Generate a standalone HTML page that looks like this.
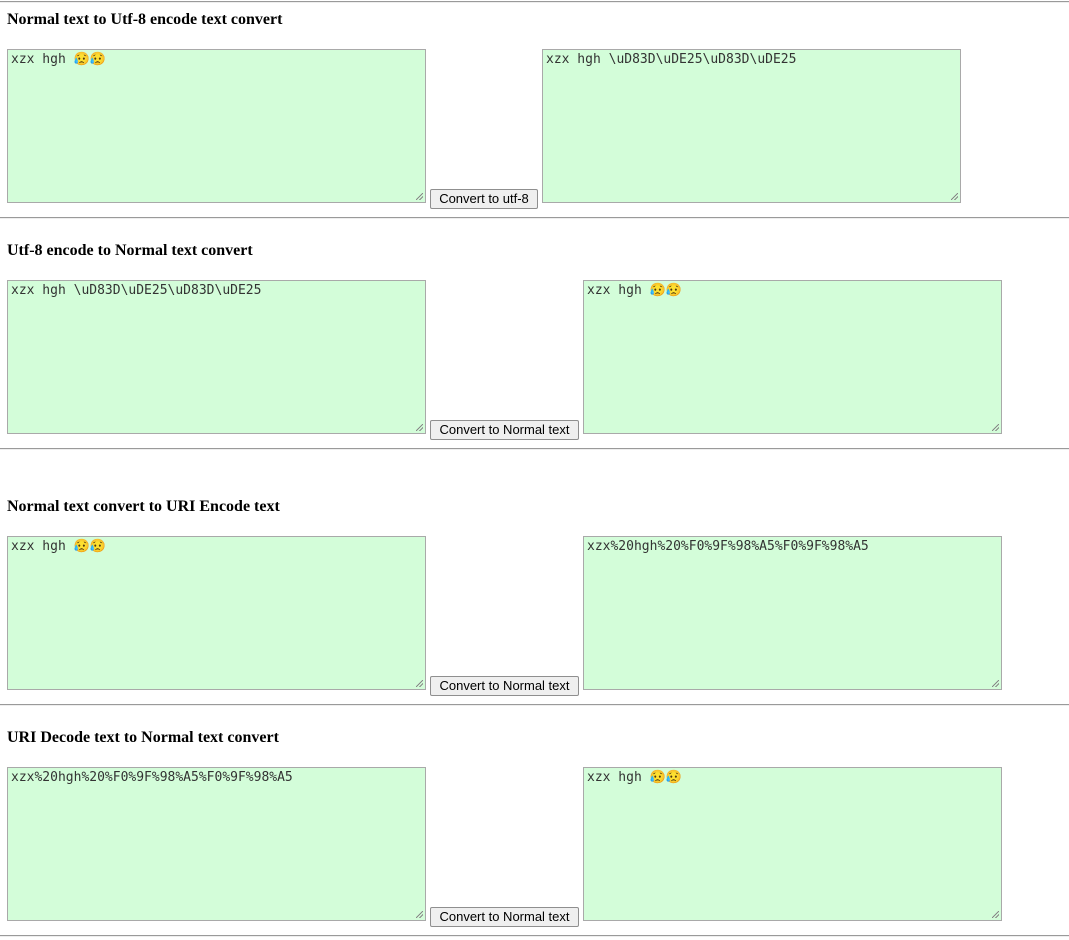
<!DOCTYPE html>
<html><head><meta charset="utf-8"><style>
body{margin:0;width:1069px;height:940px;position:relative;background:#fff;overflow:hidden}
.hr{position:absolute;left:0;width:1069px;height:0;border-top:1px solid #9a9a9a;border-bottom:1px solid #eee}
.t{position:absolute;left:7px;font:bold 16px "Liberation Serif",serif;color:#000;margin:0;white-space:nowrap}
.ta{position:absolute;box-sizing:border-box;width:419px;height:154px;background:#d3fdd9;border:1px solid #a9a9a9;font:13px "DejaVu Sans Mono","Noto Color Emoji",monospace;color:#333;padding:2px 3px;white-space:pre}
.ta:after{content:"";position:absolute;right:2px;bottom:2px;width:7px;height:7px;background:linear-gradient(135deg,transparent 45%,#888 46%,#888 54%,transparent 55%,transparent 70%,#888 71%,#888 79%,transparent 80%)}
.b{position:absolute;left:430px;height:20px;box-sizing:border-box;background:#efefef;border:1px solid #8f8f8f;border-radius:2px;font:13px "Liberation Sans",sans-serif;color:#000;padding:0 7px;line-height:18px;white-space:nowrap;text-align:center}
</style></head><body>
<div class="hr" style="top:1px"></div>
<div class="t" style="top:11px">Normal text to Utf-8 encode text convert</div>
<div class="ta" style="left:7px;top:49px">xzx hgh 😥😥</div>
<div class="b" style="top:189px;width:108px">Convert to utf-8</div>
<div class="ta" style="left:542px;top:49px">xzx hgh \uD83D\uDE25\uD83D\uDE25</div>
<div class="hr" style="top:217px"></div>

<div class="t" style="top:242px">Utf-8 encode to Normal text convert</div>
<div class="ta" style="left:7px;top:280px">xzx hgh \uD83D\uDE25\uD83D\uDE25</div>
<div class="b" style="top:420px;width:149px">Convert to Normal text</div>
<div class="ta" style="left:583px;top:280px">xzx hgh 😥😥</div>
<div class="hr" style="top:448px"></div>

<div class="t" style="top:498px">Normal text convert to URI Encode text</div>
<div class="ta" style="left:7px;top:536px">xzx hgh 😥😥</div>
<div class="b" style="top:676px;width:149px">Convert to Normal text</div>
<div class="ta" style="left:583px;top:536px">xzx%20hgh%20%F0%9F%98%A5%F0%9F%98%A5</div>
<div class="hr" style="top:704px"></div>

<div class="t" style="top:729px">URI Decode text to Normal text convert</div>
<div class="ta" style="left:7px;top:767px">xzx%20hgh%20%F0%9F%98%A5%F0%9F%98%A5</div>
<div class="b" style="top:907px;width:149px">Convert to Normal text</div>
<div class="ta" style="left:583px;top:767px">xzx hgh 😥😥</div>
<div class="hr" style="top:935px"></div>
</body></html>
